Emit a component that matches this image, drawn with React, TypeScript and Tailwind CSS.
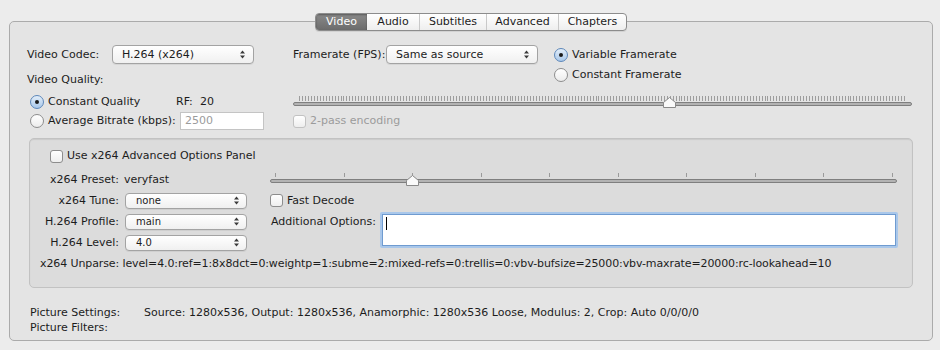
import React from "react";

function Arrows() {
  return (
    <svg width="5" height="9" viewBox="0 0 5 9" className="shrink-0">
      <path d="M0 3.5 L2.5 0.5 L5 3.5 Z" fill="#3a3a3a" />
      <path d="M0 5.5 L2.5 8.5 L5 5.5 Z" fill="#3a3a3a" />
    </svg>
  );
}

function Popup({ value, className, small }: { value: string; className: string; small?: boolean }) {
  return (
    <div
      className={`flex items-center justify-between rounded-[4px] border border-[#a3a3a3] bg-gradient-to-b from-white to-[#f0f0f0] shadow-[0_1px_0_rgba(0,0,0,0.06)] ${small ? "h-[16px] pl-[10px] pr-[7px] text-[10px]" : "h-[19px] pl-[9px] pr-[8px]"} ${className}`}
    >
      <span>{value}</span>
      <Arrows />
    </div>
  );
}

function Radio({ on }: { on?: boolean }) {
  return on ? (
    <div className="flex h-[14px] w-[14px] shrink-0 items-center justify-center rounded-full border border-[#5d87b9] bg-gradient-to-b from-[#e3eef9] to-[#a9c8ea]">
      <div className="h-[4px] w-[4px] rounded-full bg-[#1a1a1a]" />
    </div>
  ) : (
    <div className="h-[14px] w-[14px] shrink-0 rounded-full border border-[#8d8d8d] bg-gradient-to-b from-white to-[#ececec]" />
  );
}

function Check({ disabled }: { disabled?: boolean }) {
  return (
    <div
      className={`h-[13px] w-[13px] shrink-0 rounded-[3px] border bg-gradient-to-b from-white to-[#eeeeee] ${disabled ? "border-[#c2c2c2]" : "border-[#8d8d8d]"}`}
    />
  );
}

function Knob({ x, y }: { x: number; y: number }) {
  return (
    <path
      d={`M${x} ${y} L${x + 6} ${y + 5} L${x + 6} ${y + 10} L${x - 6} ${y + 10} L${x - 6} ${y + 5} Z`}
      fill="#fafafa"
      stroke="#8a8a8a"
      strokeWidth="1"
    />
  );
}

function QualitySlider() {
  const ticks = Array.from({ length: 205 }, (_, i) => 6 + i * 2.965);
  return (
    <svg width="619" height="18" className="block">
      {ticks.map((t, i) => (
        <line key={i} x1={Math.round(t) + 0.5} x2={Math.round(t) + 0.5} y1="3" y2="8" stroke="#9d9d9d" strokeWidth="1" />
      ))}
      <rect x="0.5" y="9.5" width="618" height="3" rx="1.5" fill="#b3b3b3" stroke="#7f7f7f" />
      <Knob x={376.5} y={4.5} />
    </svg>
  );
}

function PresetSlider() {
  const ticks = Array.from({ length: 10 }, (_, i) => 5 + i * 68.55);
  return (
    <svg width="627" height="21" className="block">
      {ticks.map((t, i) => (
        <line key={i} x1={Math.round(t) + 0.5} x2={Math.round(t) + 0.5} y1="4" y2="8" stroke="#9a9a9a" strokeWidth="1" />
      ))}
      <rect x="0.5" y="10.5" width="626" height="3" rx="1.5" fill="#b3b3b3" stroke="#7f7f7f" />
      <Knob x={142.5} y={6.5} />
    </svg>
  );
}

const tabs = [
  { label: "Video", w: "w-[51px]" },
  { label: "Audio", w: "w-[52px]" },
  { label: "Subtitles", w: "w-[67px]" },
  { label: "Advanced", w: "w-[72px]" },
  { label: "Chapters", w: "w-[68px]" },
];

export default function App() {
  return (
    <div className="h-[350px] w-[940px] overflow-hidden bg-[#ececec] pt-[21px] font-['DejaVu_Sans',sans-serif] text-[11px] leading-[14px] text-[#1c1c1c]">
      <div className="ml-[9px] h-[320px] w-[924px] rounded-[5px] border border-[#ababab] bg-[#e4e4e4]">
        {/* Tabs */}
        <div className="-mt-[9px] flex justify-center">
          <div className="flex h-[18px] overflow-hidden rounded-[4px] border border-[#8c8c8c] bg-gradient-to-b from-white to-[#eeeeee] shadow-[0_1px_0_rgba(0,0,0,0.08)]">
            {tabs.map((t, i) => (
              <div
                key={t.label}
                className={`flex items-center justify-center ${t.w} ${i === 0 ? "bg-gradient-to-b from-[#8a8a8a] to-[#6c6c6c] text-white shadow-[inset_0_1px_2px_rgba(0,0,0,0.35)]" : "border-l border-[#c9c9c9]"} ${i === 1 ? "border-l-0" : ""}`}
              >
                {t.label}
              </div>
            ))}
          </div>
        </div>

        {/* Row: codec / framerate */}
        <div className="mt-[14px] flex h-[19px] items-center pl-[17px]">
          <div className="w-[85px]">Video Codec:</div>
          <Popup value="H.264 (x264)" className="w-[142px]" />
          <div className="w-[39px]" />
          <div className="w-[93px]">Framerate (FPS):</div>
          <Popup value="Same as source" className="w-[152px]" />
          <div className="ml-[16px] flex items-center gap-[4px]">
            <Radio on />
            <span>Variable Framerate</span>
          </div>
        </div>

        <div className="flex h-[20px] items-start pl-[17px]">
          <div className="w-[527px] pt-[9px]">Video Quality:</div>
          <div className="flex items-center gap-[4px] pt-[4px]">
            <Radio />
            <span>Constant Framerate</span>
          </div>
        </div>

        {/* Quality */}
        <div className="mt-[8px] flex h-[20px] items-center pl-[17px]">
          <div className="flex w-[266px] items-center">
            <div className="ml-[3px] flex w-[146px] items-center gap-[4px]">
              <Radio on />
              <span>Constant Quality</span>
            </div>
            <span className="w-[24px]">RF:</span>
            <span>20</span>
          </div>
          <QualitySlider />
        </div>

        <div className="flex h-[18px] items-center pl-[17px]">
          <div className="flex w-[266px] items-center">
            <div className="ml-[3px] flex w-[150px] items-center gap-[4px]">
              <Radio />
              <span>Average Bitrate (kbps):</span>
            </div>
            <div className="flex h-[18px] w-[84px] items-center border border-[#c4c4c4] bg-white pl-[4px] text-[#9b9b9b]">2500</div>
          </div>
          <div className="flex items-center gap-[4px] text-[#9b9b9b]">
            <Check disabled />
            <span>2-pass encoding</span>
          </div>
        </div>

        {/* Advanced panel */}
        <div className="mx-[19px] mt-[8px] h-[150px] rounded-[5px] border border-[#c2c2c2] bg-[#dcdcdc] shadow-[inset_0_1px_1px_rgba(0,0,0,0.08)]">
          <div className="mt-[10px] flex h-[14px] items-center gap-[4px] pl-[20px]">
            <Check />
            <span>Use x264 Advanced Options Panel</span>
          </div>

          <div className="mt-[6px] flex">
            <div className="w-[240px]">
              <div className="flex h-[21px] items-center">
                <div className="w-[89px] text-right">x264 Preset:</div>
                <div className="ml-[5px]">veryfast</div>
              </div>
              {[
                ["x264 Tune:", "none"],
                ["H.264 Profile:", "main"],
                ["H.264 Level:", "4.0"],
              ].map(([label, val]) => (
                <div key={label} className="flex h-[21px] items-center">
                  <div className="w-[89px] text-right">{label}</div>
                  <Popup value={val} small className="ml-[6px] w-[122px]" />
                </div>
              ))}
            </div>

            <div className="flex-1">
              <PresetSlider />
              <div className="flex h-[21px] items-center gap-[4px]">
                <Check />
                <span>Fast Decode</span>
              </div>
              <div className="flex">
                <div className="ml-[1px] w-[110px] pt-[4px]">Additional Options:</div>
                <div className="-ml-[1px] mt-[1px] h-[36px] w-[518px] rounded-[2px] border-2 border-[#a9c7ea] bg-white shadow-[inset_0_0_0_1px_#6f9bd0]">
                  <div className="ml-[4px] mt-[3px] h-[13px] w-px bg-black" />
                </div>
              </div>
            </div>
          </div>

          <div className="mt-[4px] pl-[10px] tracking-[-0.11px]">
            x264 Unparse: level=4.0:ref=1:8x8dct=0:weightp=1:subme=2:mixed-refs=0:trellis=0:vbv-bufsize=25000:vbv-maxrate=20000:rc-lookahead=10
          </div>
        </div>

        {/* Picture info */}
        <div className="mt-[17px] pl-[20px]">
          <div className="flex h-[15px] items-center">
            <div className="w-[114px]">Picture Settings:</div>
            <div>Source: 1280x536, Output: 1280x536, Anamorphic: 1280x536 Loose, Modulus: 2, Crop: Auto 0/0/0/0</div>
          </div>
          <div className="flex h-[15px] items-center">Picture Filters:</div>
        </div>
      </div>
    </div>
  );
}
